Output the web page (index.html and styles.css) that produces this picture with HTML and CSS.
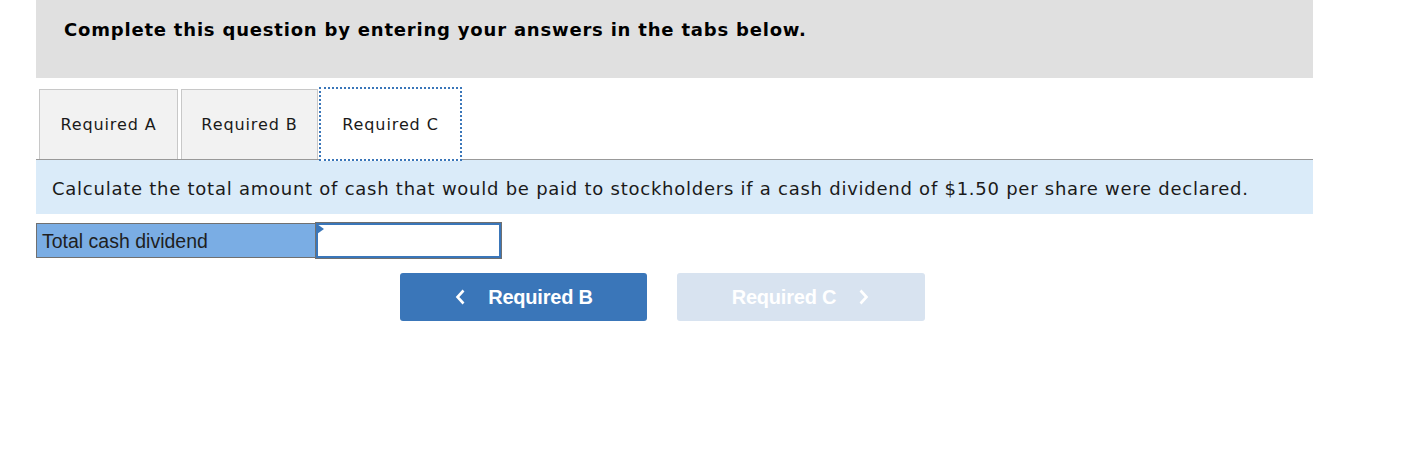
FILE: index.html
```html
<html>
<head>
  <link rel="stylesheet" href="styles.css">
</head>
<body>
  <div class="question">
    <!-- Instructions header -->
    <div class="question-header">
      <h1>Complete this question by entering your answers in the tabs below.</h1>
    </div>

    <!-- Tabs -->
    <div class="tab-bar">
      <button class="tab tab-a">Required A</button>
      <button class="tab tab-b">Required B</button>
      <button class="tab active">Required C</button>
    </div>

    <div class="prompt">
      Calculate the total amount of cash that would be paid to stockholders if a cash dividend of $1.50 per share were declared.
    </div>

    <!-- Answer row -->
    <div class="answer-row">
      <div class="answer-label">Total cash dividend</div>
      <div class="answer-cell">
        <span class="cell-marker"></span>
        <input type="text" class="answer-input">
      </div>
    </div>

    <!-- Navigation -->
    <div class="nav-buttons">
      <button class="nav-btn prev">
        <svg width="12" height="16" viewBox="0 0 12 16"><path d="M9.5 1.5 L3.5 8 L9.5 14.5" fill="none" stroke="#fff" stroke-width="2.6"/></svg>
        <span>Required B</span>
      </button>
      <button class="nav-btn next" disabled>
        <span>Required C</span>
        <svg width="12" height="16" viewBox="0 0 12 16"><path d="M2.5 1.5 L8.5 8 L2.5 14.5" fill="none" stroke="#fff" stroke-width="2.6"/></svg>
      </button>
    </div>
  </div>
</body>
</html>
```

FILE: styles.css
```css
/* General styling */
body {
  margin: 0;
  background: #fff;
  font-family: 'DejaVu Sans', Verdana, sans-serif;
  color: #1a1a1a;
}

.question {
  width: 1277px;
  margin-left: 36px;
}

/* Header */
.question-header {
  background-color: #e0e0e0;
  height: 78px;
  padding: 0 28px;
  box-sizing: border-box;
}

.question-header h1 {
  margin: 0;
  padding-top: 19px;
  font-size: 18px;
  letter-spacing: 0.8px;
  font-weight: bold;
  color: #000;
}

/* Tabs */
.tab-bar {
  display: flex;
  align-items: flex-end;
  margin-top: 11px;
  padding-left: 3px;
  border-bottom: 1px solid #999;
  height: 70px;
}

.tab {
  height: 70px;
  padding: 0;
  margin-right: 3px;
  background: #f2f2f2;
  border: 1px solid #c8c8c8;
  border-bottom: none;
  font-family: 'DejaVu Sans', Verdana, sans-serif;
  font-size: 16px;
  letter-spacing: 0.9px;
  color: #1a1a1a;
  cursor: pointer;
}

.tab-a {
  width: 139px;
}

.tab-b {
  width: 137px;
  margin-right: 1px;
}

.tab.active {
  width: 143px;
  height: 74px;
  margin-bottom: -2px;
  background: #fff;
  border: 2px dotted #3a76b9;
}

/* Prompt */
.prompt {
  display: flex;
  align-items: center;
  background-color: #daebf9;
  height: 54px;
  padding: 2px 16px 0;
  box-sizing: border-box;
  font-size: 18px;
  letter-spacing: 0.75px;
  color: #1a1a1a;
}

/* Answer row */
.answer-row {
  display: flex;
  margin-top: 9px;
  height: 35px;
}

.answer-label {
  display: flex;
  align-items: center;
  width: 280px;
  box-sizing: border-box;
  background-color: #7aade4;
  border: 1px solid #707070;
  border-right: none;
  padding: 1px 5px 0;
  font-family: 'Liberation Sans', Arial, sans-serif;
  font-size: 19.5px;
  color: #1f1f1f;
}

.answer-cell {
  position: relative;
  width: 185px;
}

.answer-input {
  width: 100%;
  height: 100%;
  box-sizing: border-box;
  border: 2px solid #3a76b9;
  outline: 1px solid #707070;
  font-size: 16px;
  padding: 0 6px;
}

.cell-marker {
  position: absolute;
  top: 1px;
  left: 1px;
  width: 0;
  height: 0;
  border-top: 5px solid transparent;
  border-bottom: 5px solid transparent;
  border-left: 7px solid #3a76b9;
}

/* Navigation buttons */
.nav-buttons {
  display: flex;
  gap: 30px;
  margin-top: 15px;
  padding-left: 364px;
}

.nav-btn {
  display: flex;
  align-items: center;
  justify-content: center;
  gap: 22px;
  width: 247px;
  height: 48px;
  border: none;
  border-radius: 3px;
  font-family: 'Liberation Sans', Arial, sans-serif;
  font-size: 20px;
  font-weight: bold;
  letter-spacing: -0.2px;
  color: #fff;
  cursor: pointer;
}

.nav-btn.prev {
  background-color: #3a76b9;
}

.nav-btn.next {
  width: 248px;
  background-color: #d8e3f0;
  cursor: default;
}
```
